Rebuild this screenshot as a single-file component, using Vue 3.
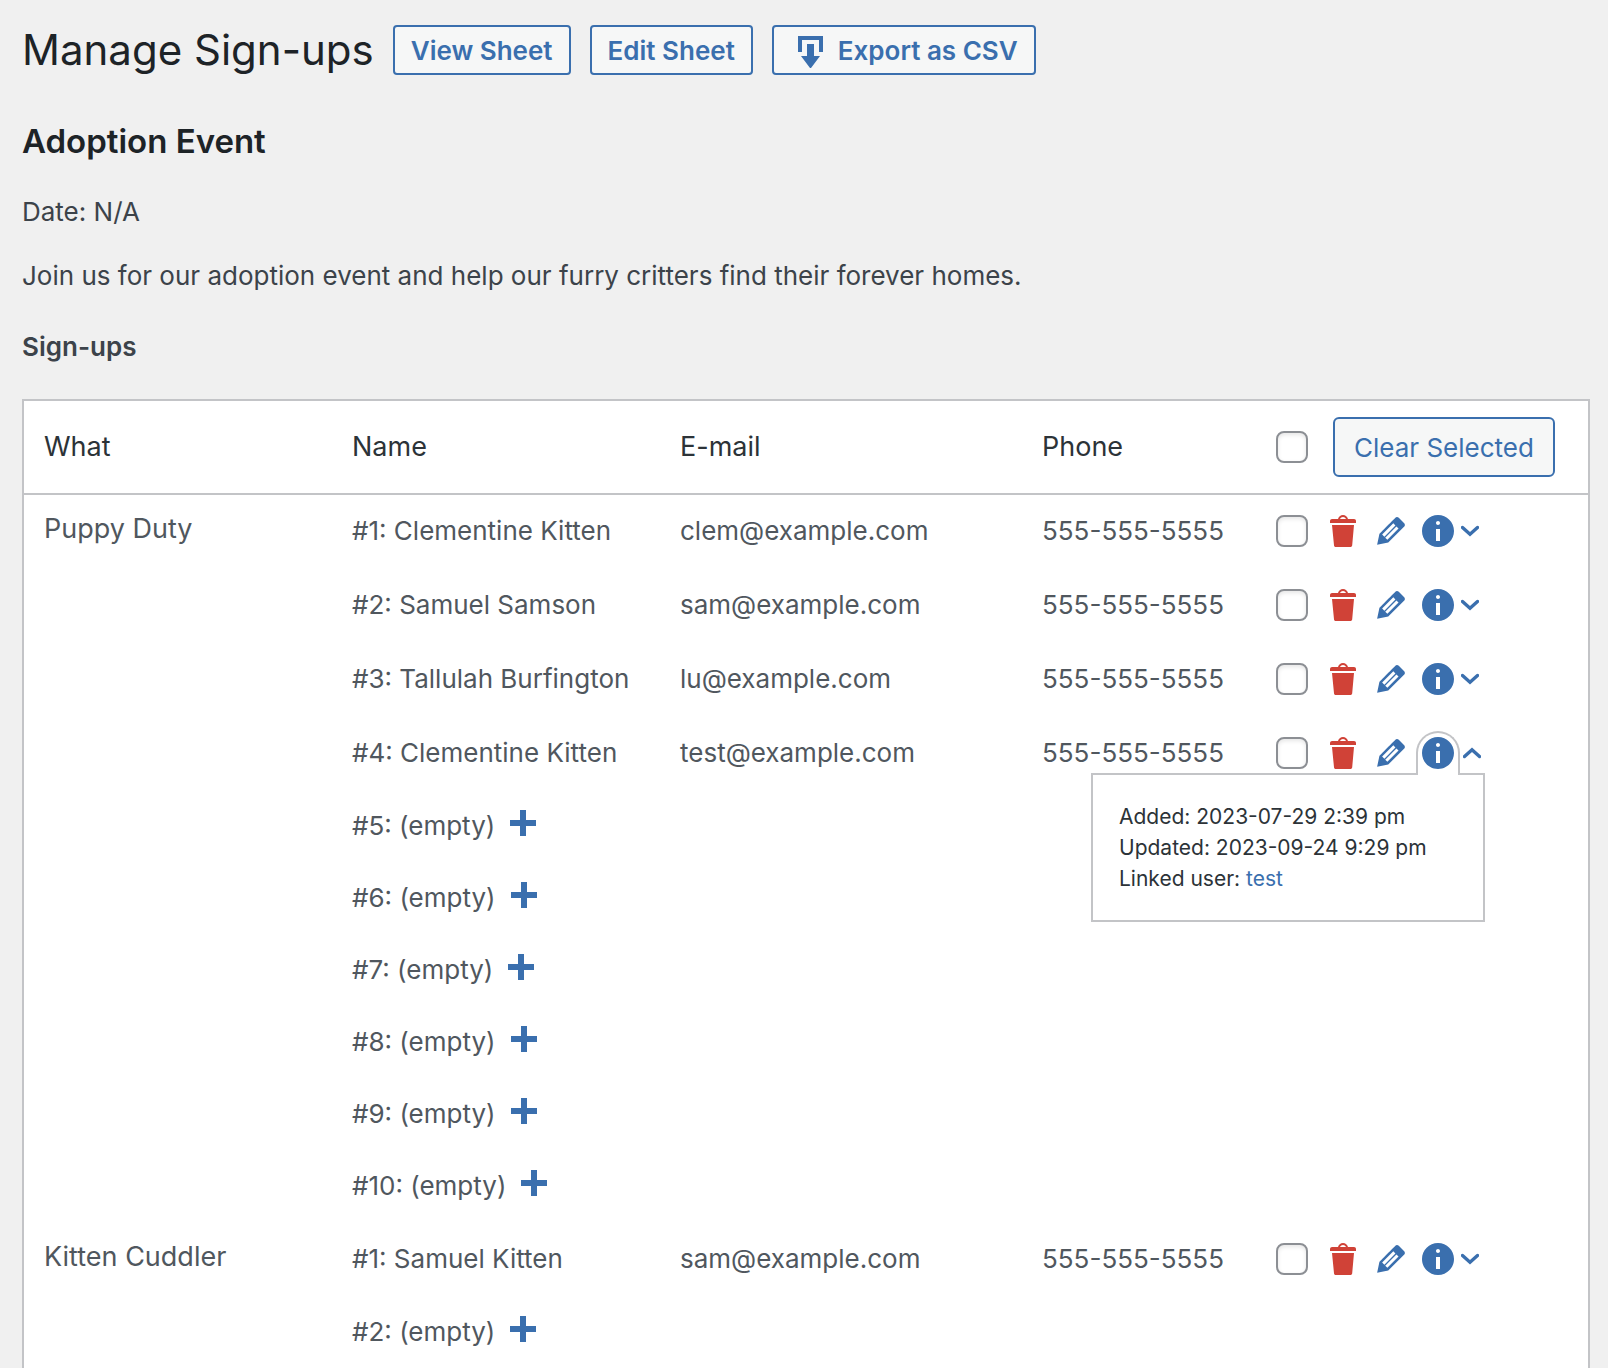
<script setup>
import { reactive } from 'vue'

const phone = '555-555-5555'
const person = (name, email, extra = {}) => ({ name, email, phone, open: false, selected: false, ...extra })

const state = reactive({
  allSelected: false,
  tasks: [
    {
      title: 'Puppy Duty',
      spots: [
        person('Clementine Kitten', 'clem@example.com'),
        person('Samuel Samson', 'sam@example.com'),
        person('Tallulah Burfington', 'lu@example.com'),
        person('Clementine Kitten', 'test@example.com', {
          open: true,
          added: '2023-07-29 2:39 pm',
          updated: '2023-09-24 9:29 pm',
          user: 'test',
        }),
        null, null, null, null, null, null,
      ],
    },
    {
      title: 'Kitten Cuddler',
      spots: [person('Samuel Kitten', 'sam@example.com'), null],
    },
  ],
})

function toggleAll() {
  for (const task of state.tasks) {
    for (const spot of task.spots) if (spot) spot.selected = state.allSelected
  }
}
</script>

<template>
  <main class="page">
    <header class="page-head">
      <h1>Manage Sign-ups</h1>
      <a class="action" href="#view">View Sheet</a>
      <a class="action" href="#edit">Edit Sheet</a>
      <a class="action" href="#export">
        <svg class="export-icon" viewBox="0 0 26 34" aria-hidden="true">
          <path d="M0 1h25v16h-4V5H4v12H0z" />
          <path d="M9 9h7v12h6l-9 12h-1L3 21h6z" />
        </svg>
        Export as CSV
      </a>
    </header>

    <h2>Adoption Event</h2>
    <p>Date: N/A</p>
    <p>Join us for our adoption event and help our furry critters find their forever homes.</p>
    <h3>Sign-ups</h3>

    <table>
      <colgroup>
        <col />
        <col class="col-name" />
        <col class="col-email" />
        <col class="col-phone" />
        <col class="col-actions" />
      </colgroup>
      <thead>
        <tr>
          <th scope="col">What</th>
          <th scope="col">Name</th>
          <th scope="col">E-mail</th>
          <th scope="col">Phone</th>
          <th scope="col">
            <div class="tools">
              <input v-model="state.allSelected" type="checkbox" aria-label="Select all sign-ups" @change="toggleAll" />
              <button class="clear" type="button">Clear Selected</button>
            </div>
          </th>
        </tr>
      </thead>
      <tbody v-for="task in state.tasks" :key="task.title">
        <tr v-for="(spot, i) in task.spots" :key="i" :class="spot ? 'filled' : 'empty'">
          <th v-if="i === 0" class="what" scope="rowgroup" :rowspan="task.spots.length">{{ task.title }}</th>
          <template v-if="spot">
            <td>#{{ i + 1 }}: {{ spot.name }}</td>
            <td>{{ spot.email }}</td>
            <td>{{ spot.phone }}</td>
            <td>
              <div class="tools">
                <input v-model="spot.selected" type="checkbox" :aria-label="`Select ${spot.name}`" />
                <button class="icon trash" type="button" aria-label="Clear spot">
                  <svg viewBox="3 2 13 16">
                    <path d="M12 4h3c.6 0 1 .4 1 1v1H3V5c0-.6.5-1 1-1h3c.2-1.1 1.3-2 2.5-2s2.3.9 2.5 2zM8 4h3c-.2-.6-.9-1-1.5-1S8.2 3.4 8 4zM4 7h11l-.9 10.1c0 .5-.5.9-1 .9H5.9c-.5 0-.9-.4-.9-.9L4 7z" />
                  </svg>
                </button>
                <a class="icon edit" href="#edit-spot" aria-label="Edit spot">
                  <svg viewBox="3 3 14 14">
                    <path d="M13.89 3.39l2.71 2.72c.46.46.42 1.24.03 1.64l-8.01 8.02-5.56 1.16 1.16-5.58s7.6-7.63 7.99-8.03c.39-.39 1.22-.39 1.68.07zm-2.73 2.79l-5.59 5.61 1.11 1.11 5.54-5.65zm-2.97 8.23l5.58-5.6-1.07-1.08-5.59 5.6z" />
                  </svg>
                </a>
                <div class="details" :class="{ open: spot.open }">
                  <button class="toggle" type="button" :aria-expanded="spot.open" aria-label="Details" @click="spot.open = !spot.open">
                    <span class="badge">
                      <svg class="info" viewBox="2 2 16 16">
                        <path d="M10 2c4.42 0 8 3.58 8 8s-3.58 8-8 8-8-3.58-8-8 3.58-8 8-8zm1 4c0-.55-.45-1-1-1s-1 .45-1 1 .45 1 1 1 1-.45 1-1zm0 9V9H9v6h2z" />
                      </svg>
                    </span>
                    <svg class="chevron" viewBox="0 0 18 12">
                      <path :d="spot.open ? 'M1.5 9.5L9 2.8l7.5 6.7' : 'M1.5 2.5L9 9.2l7.5-6.7'" />
                    </svg>
                  </button>
                  <div v-if="spot.open" class="popover">
                    <div>Added: {{ spot.added }}</div>
                    <div>Updated: {{ spot.updated }}</div>
                    <div>Linked user: <a href="#user">{{ spot.user }}</a></div>
                  </div>
                </div>
              </div>
            </td>
          </template>
          <template v-else>
            <td>
              <div class="vacant">
                #{{ i + 1 }}: (empty)
                <a class="add" href="#add" aria-label="Add sign-up">
                  <svg viewBox="0 0 26 26"><path d="M10 0h6v10h10v6H16v10h-6V16H0v-6h10z" /></svg>
                </a>
              </div>
            </td>
            <td></td>
            <td></td>
            <td></td>
          </template>
        </tr>
      </tbody>
    </table>
  </main>
</template>

<style>
html {
  background: #f0f0f0;
  scrollbar-width: none;
}
</style>

<style scoped>
.page {
  padding: 20px 18px 20px 22px;
  font: 26px/40px Inter, "Liberation Sans", sans-serif;
  color: #3c434a;
}
.page-head {
  display: flex;
  align-items: center;
  gap: 19px;
}
h1 {
  margin: 0;
  font-size: 42px;
  line-height: 60px;
  font-weight: 400;
  color: #1d2327;
}
.action {
  display: flex;
  align-items: center;
  box-sizing: border-box;
  height: 50px;
  padding: 2px 16px 0;
  border: 2px solid #3a6fae;
  border-radius: 4px;
  background: #f6f7f7;
  color: #3a6fae;
  font-weight: 600;
  text-decoration: none;
  white-space: nowrap;
}
.export-icon {
  width: 26px;
  height: 34px;
  margin: 2px 14px 0 8px;
}
svg {
  display: block;
  fill: currentColor;
}
h2 {
  margin: 39px 0 29px;
  font-size: 33px;
  line-height: 44px;
  font-weight: 600;
  color: #1d2327;
}
p {
  margin: 0 0 24px;
}
h3 {
  margin: 31px 0 32px;
  font-size: 26px;
  font-weight: 600;
}
table {
  width: 100%;
  table-layout: fixed;
  border: 2px solid #c3c4c7;
  border-spacing: 0;
  background: #fff;
  color: #50575e;
}
.col-name {
  width: 328px;
}
.col-email {
  width: 362px;
}
.col-phone {
  width: 234px;
}
.col-actions {
  width: 332px;
}
th,
td {
  padding: 0 20px;
  text-align: left;
  font-weight: 400;
  white-space: nowrap;
}
thead th {
  height: 92px;
  border-bottom: 2px solid #c3c4c7;
  font-size: 27px;
  color: #2c3338;
}
td {
  box-sizing: border-box;
  padding-bottom: 2px;
}
.filled td {
  height: 74px;
}
.empty td {
  height: 72px;
}
.what {
  padding-top: 14px;
  font-size: 27px;
  vertical-align: top;
}
.tools {
  display: flex;
  align-items: center;
}
input {
  appearance: none;
  box-sizing: border-box;
  width: 32px;
  height: 32px;
  margin: 0;
  border: 2px solid #8c8f94;
  border-radius: 8px;
  background: #fff;
  box-shadow: inset 0 2px 4px rgba(0, 0, 0, 0.1);
}
.clear {
  height: 60px;
  margin-left: 25px;
  padding: 2px 19px 0;
  border: 2px solid #3a6fae;
  border-radius: 6px;
  background: #f6f7f7;
  color: #3a6fae;
  font: inherit;
  font-size: 26px;
}
.icon,
.toggle {
  display: block;
  padding: 0;
  border: 0;
  background: none;
  color: #3a6fae;
}
.trash {
  width: 26px;
  margin-left: 22px;
  color: #d04237;
}
.edit {
  width: 28px;
  margin-left: 21px;
}
.details {
  position: relative;
  margin-left: 11px;
}
.toggle {
  display: flex;
  align-items: center;
}
.badge {
  position: relative;
  z-index: 2;
  box-sizing: border-box;
  height: 44px;
  padding: 4px;
  border: 2px solid transparent;
  border-bottom: 0;
  border-radius: 22px 22px 0 0;
}
.open .badge {
  border-color: #c3c4c7;
  background: #fff;
}
.info {
  width: 32px;
  height: 32px;
}
.chevron {
  width: 18px;
  height: 12px;
  margin-left: 1px;
  fill: none;
  stroke: currentColor;
  stroke-width: 3.4;
  stroke-linecap: round;
}
.open .chevron {
  margin-left: 3px;
}
.popover {
  position: absolute;
  z-index: 1;
  top: 42px;
  right: -4px;
  box-sizing: border-box;
  width: 394px;
  padding: 26px;
  border: 2px solid #c3c4c7;
  background: #fff;
  color: #2c3338;
  font-size: 21px;
  line-height: 31px;
}
.popover a {
  color: #3a6fae;
  text-decoration: none;
}
.vacant {
  display: flex;
  align-items: center;
  gap: 15px;
}
.add {
  width: 26px;
  margin-bottom: 6px;
  color: #3a6fae;
}
</style>
